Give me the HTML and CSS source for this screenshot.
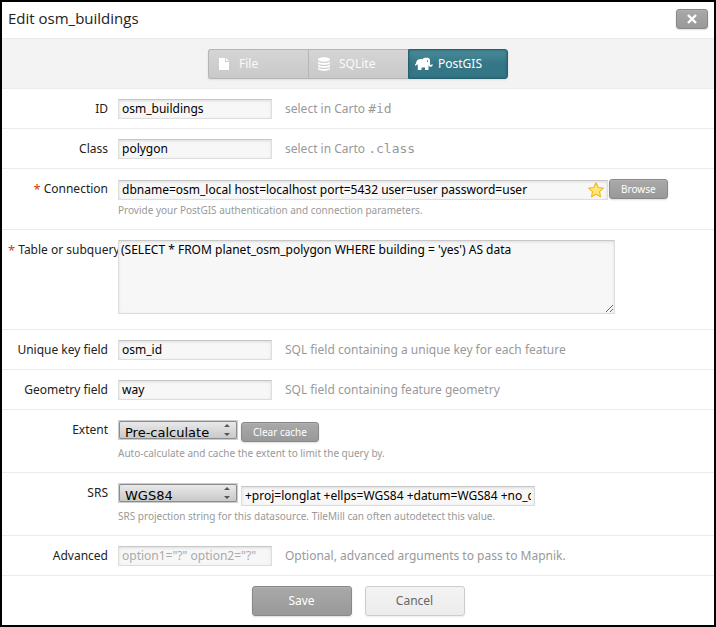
FILE: index.html
```html
<!DOCTYPE html>
<html lang="en">
<head>
<meta charset="utf-8">
<title>Edit osm_buildings</title>
<link rel="stylesheet" href="styles.css">
</head>
<body>
<main class="dialog">
  <header class="titlebar">
    <h1>Edit osm_buildings</h1>
    <button class="button close" type="button" aria-label="Close">
      <svg viewBox="0 0 10 10" width="10" height="10"><path d="M1 1L9 9M9 1L1 9" stroke="#fff" stroke-width="2.4"/></svg>
    </button>
  </header>
  <nav class="tabbar">
    <div class="tabs">
      <button class="tab" type="button">
        <svg viewBox="0 0 18 16" width="18" height="16"><path d="M3 2h6v4h4v8H3zM10 2l3 3h-3z" fill="#fff"/></svg>
        File
      </button>
      <button class="tab" type="button">
        <svg viewBox="0 0 18 16" width="18" height="16"><path d="M2 3.500C2 .5 14 .5 14 3.500S2 6.500 2 3.500zM2 5.500c2 2 10 2 12 0v1.500c0 2.500-12 2.500-12 0zM2 8.500c2 2 10 2 12 0V10c0 2.500-12 2.500-12 0zM2 11.500c2 2 10 2 12 0v1c0 3-12 3-12 0z" fill="#fff"/></svg>
        SQLite
      </button>
      <button class="tab active" type="button">
        <svg viewBox="0 0 18 16" width="18" height="16"><path d="M0 8.500C1 8 1 7 1.300 6 2 3.700 3.500 3 5.500 3c.8 0 1.500 0 2 .2C8.300 2 9.300 1.700 10.500 1.700h2C14.500 1.700 15 3.300 15 5v2.500c0 1 .4 1.500 1 1.500.4 0 .6-.3.700-.8l1.100.3c-.2 1.500-.9 2.200-2 2.200-1.100 0-1.900-.5-2.300-1.500V14h-3.500v-2.500H6.500V14H2.800V9.500L2 8C1.700 9 1.200 9.700.2 9.700z" fill="#fff"/><path d="M12.500 4.300v1.700" fill="none" stroke="#347685" stroke-width=".9"/></svg>
        PostGIS
      </button>
    </div>
  </nav>
  <form>
    <div class="row">
      <label for="id">ID</label>
      <div class="field">
        <div class="controls"><input class="text" id="id" type="text" value="osm_buildings"><span class="hint">select in Carto <code>#id</code></span></div>
      </div>
    </div>
    <div class="row">
      <label for="class">Class</label>
      <div class="field">
        <div class="controls"><input class="text" id="class" type="text" value="polygon"><span class="hint">select in Carto <code>.class</code></span></div>
      </div>
    </div>
    <div class="row">
      <label for="connection"><span class="required">*</span> Connection</label>
      <div class="field">
        <div class="controls tight">
          <div class="connection">
            <input class="text" id="connection" type="text" value="dbname=osm_local host=localhost port=5432 user=user password=user">
            <button class="star" type="button" aria-label="Favorite">
              <svg viewBox="0 0 16 16" width="16" height="16"><path d="M8 .8l2.200 4.700 5.100.6-3.800 3.500 1 5.100L8 12.200l-4.500 2.500 1-5.100L.7 6.100l5.100-.6z" fill="#ffe873" stroke="#f5b921" stroke-width="1.200" stroke-linejoin="round"/></svg>
            </button>
          </div>
          <button class="button small" type="button">Browse</button>
        </div>
        <p class="help">Provide your PostGIS authentication and connection parameters.</p>
      </div>
    </div>
    <div class="row">
      <label for="table"><span class="required">*</span> Table or subquery</label>
      <div class="field">
        <textarea class="text" id="table">(SELECT * FROM planet_osm_polygon WHERE building = 'yes') AS data</textarea>
      </div>
    </div>
    <div class="row">
      <label for="key">Unique key field</label>
      <div class="field">
        <div class="controls"><input class="text" id="key" type="text" value="osm_id"><span class="hint">SQL field containing a unique key for each feature</span></div>
      </div>
    </div>
    <div class="row">
      <label for="geometry">Geometry field</label>
      <div class="field">
        <div class="controls"><input class="text" id="geometry" type="text" value="way"><span class="hint">SQL field containing feature geometry</span></div>
      </div>
    </div>
    <div class="row">
      <label for="extent">Extent</label>
      <div class="field">
        <div class="controls choice">
          <div class="select"><select id="extent"><option>Pre-calculate</option></select><svg viewBox="0 0 6 12" width="6" height="12"><path d="M0 3l3-3 3 3zM0 9l3 3 3-3z" fill="#555"/></svg></div>
          <button class="button small" type="button">Clear cache</button>
        </div>
        <p class="help">Auto-calculate and cache the extent to limit the query by.</p>
      </div>
    </div>
    <div class="row">
      <label for="srs">SRS</label>
      <div class="field">
        <div class="controls choice">
          <div class="select"><select id="srs"><option>WGS84</option></select><svg viewBox="0 0 6 12" width="6" height="12"><path d="M0 3l3-3 3 3zM0 9l3 3 3-3z" fill="#555"/></svg></div>
          <input class="text projection" type="text" aria-label="SRS projection string" value="+proj=longlat +ellps=WGS84 +datum=WGS84 +no_defs">
        </div>
        <p class="help">SRS projection string for this datasource. TileMill can often autodetect this value.</p>
      </div>
    </div>
    <div class="row">
      <label for="advanced">Advanced</label>
      <div class="field">
        <div class="controls"><input class="text" id="advanced" type="text" placeholder='option1="?" option2="?"'><span class="hint">Optional, advanced arguments to pass to Mapnik.</span></div>
      </div>
    </div>
    <footer class="actions">
      <button class="button large" type="submit">Save</button>
      <button class="button large light" type="button">Cancel</button>
    </footer>
  </form>
</main>
</body>
</html>
```
FILE: styles.css
```css
* {
  box-sizing: border-box;
}

body {
  margin: 0;
  background: #fff;
  color: #222;
  font: 12px/20px "Noto Sans", "Open Sans", sans-serif;
}

button,
input,
textarea {
  font: inherit;
  margin: 0;
}

.dialog {
  min-height: 100vh;
  border: 2px solid #000;
}

.titlebar {
  display: flex;
  align-items: center;
  justify-content: space-between;
  height: 36px;
  padding: 0 6px;
}

h1 {
  margin: 0;
  padding-bottom: 4px;
  font-family: "Open Sans", sans-serif;
  font-size: 15px;
  font-weight: 400;
}

.close {
  margin-bottom: 2px;
}

.tabbar {
  display: flex;
  justify-content: center;
  padding: 10px 0 9px;
  background: #f3f3f3;
  border-top: 1px solid #e8e8e8;
}

.tabs {
  display: grid;
  grid-template-columns: repeat(3, 1fr);
  width: 300px;
  height: 30px;
  border-radius: 3px;
  box-shadow: 0 1px 2px #ddd;
}

.tab {
  display: flex;
  align-items: center;
  gap: 5px;
  padding: 0 0 0 7px;
  border: 1px solid #b5b5b5;
  border-right-width: 0;
  background: linear-gradient(#d5d5d5, #c9c9c9);
  color: #fafafa;
}

.tab:first-child {
  border-radius: 3px 0 0 3px;
}

.tab:last-child {
  border-radius: 0 3px 3px 0;
}

.tab.active {
  padding-left: 6px;
  border: 1px solid #24606e;
  background: linear-gradient(#4a8b99, #347685 50%);
  box-shadow: inset 0 0 3px #24606e;
  color: #fff;
}

.row {
  display: flex;
  padding: 10px 0 9px;
  border-top: 1px solid #ebebeb;
}

.row > label {
  display: flex;
  flex: none;
  justify-content: flex-end;
  gap: 3px;
  width: 116px;
  padding: 0 10px 0 6px;
  white-space: nowrap;
}

.row > label:has(+ .field textarea) {
  justify-content: flex-start;
  padding-right: 0;
  overflow: hidden;
}

.required {
  color: #d03a10;
  font-size: 13px;
}

.field {
  flex: 1;
  min-width: 0;
}

.controls {
  display: flex;
}

.controls.tight {
  gap: 1px;
}

.controls.choice {
  gap: 3px;
  padding-bottom: 1px;
}

.text {
  width: 154px;
  height: 20px;
  padding: 0 3px;
  border: 1px solid #ddd;
  border-top-color: #c8c8c8;
  border-radius: 0;
  outline: 0;
  background: #f7f7f7;
  box-shadow: inset 0 1px 3px #ddd;
  color: #000;
}

.text::placeholder {
  color: #aaa;
}

textarea.text {
  display: block;
  width: 497px;
  height: 74px;
  margin-bottom: 6px;
  padding: 0 2px;
  line-height: 18px;
}

.hint {
  margin-left: 13px;
  color: #999;
}

code {
  font: 13px/18px "DejaVu Sans Mono", monospace;
}

.help {
  margin: 0;
  color: #999;
  font-size: 10px;
}

.connection {
  position: relative;
  width: 490px;
  padding-top: 1px;
}

.connection .text {
  display: block;
  width: 100%;
  padding-right: 24px;
}

.star {
  position: absolute;
  top: 3px;
  right: 4px;
  width: 16px;
  height: 16px;
  padding: 0;
  border: 0;
  background: none;
}

.star svg {
  display: block;
}

.button {
  border: 1px solid #888;
  border-radius: 3px;
  background: linear-gradient(#a9a9a9, #999);
  box-shadow: 0 1px 2px #ddd, inset 0 1px #b0b0b0;
  color: #fff;
}

.close {
  display: grid;
  place-items: center;
  width: 32px;
  height: 20px;
  padding: 0;
}

.small {
  height: 20px;
  padding: 0 11px;
  font-size: 10px;
  line-height: 18px;
}

.choice .button,
.choice .text {
  margin-top: 2px;
}

.choice .text {
  margin-top: 3px;
  margin-bottom: -1px;
}

.select {
  position: relative;
  width: 120px;
  height: 20px;
  padding: 1px;
  background: #ccc;
}

.select select {
  display: block;
  width: 100%;
  height: 18px;
  padding: 3px 5px 0;
  overflow: hidden;
  appearance: none;
  border: 1px solid #8c8c8c;
  border-radius: 2px;
  outline: 0;
  background: linear-gradient(#e9e9e9, #c9c9c9);
  color: #000;
  font: 13px/16px "DejaVu Sans", sans-serif;
}

.select svg {
  position: absolute;
  top: 4px;
  right: 8px;
  pointer-events: none;
}

.text.projection {
  width: 294px;
}

.actions {
  display: flex;
  justify-content: center;
  gap: 13px;
  padding: 10px 0 9px;
  border-top: 1px solid #ebebeb;
}

.large {
  width: 100px;
  height: 30px;
}

.light {
  border-color: #ccc;
  background: linear-gradient(#f3f3f3, #ececec);
  box-shadow: 0 1px 2px #eee;
  color: #666;
}
```
